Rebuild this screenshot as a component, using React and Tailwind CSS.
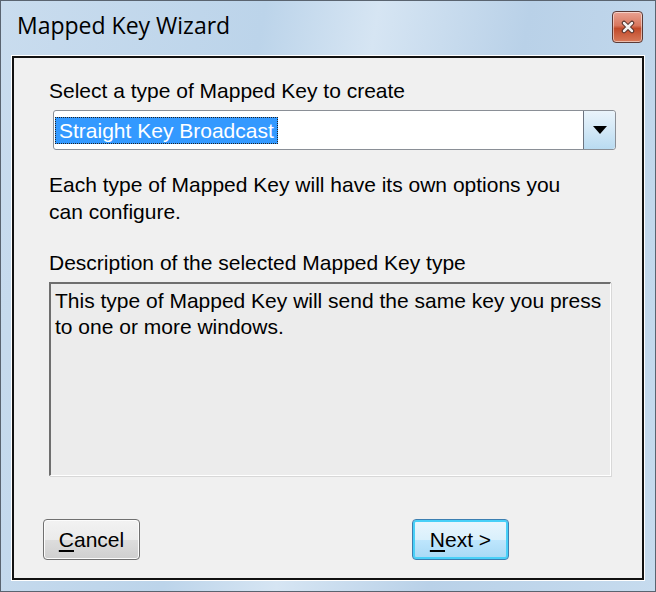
export default function App() {
  const sans = { fontFamily: '"Liberation Sans", Arial, sans-serif' };
  return (
    <div className="w-[656px] h-[592px] flex flex-col border border-[#5a6470] bg-[linear-gradient(100deg,#c9dcee_0%,#bcd4ea_35%,#d6e5f3_50%,#b9d1e8_70%,#c6dbee_100%)] px-[11px] pb-[11px]">
      <div className="h-[55px] flex items-start justify-between">
        <div className="pt-[7px] pl-[5px] text-[23px] text-black" style={{ fontFamily: '"Open Sans", "Noto Sans", sans-serif' }}>
          Mapped Key Wizard
        </div>
        <div className="mt-[10px] mr-[1px] w-[31px] h-[32px] rounded-[4px] border border-[#5b3a36] bg-[linear-gradient(180deg,#e9a292_0%,#d8775e_45%,#c14a2a_55%,#d87a5a_100%)] flex items-center justify-center shadow-[inset_0_0_0_1px_rgba(255,255,255,0.5)]">
          <svg width="14" height="14" viewBox="0 0 14 14">
            <path d="M3 3 L11 11 M11 3 L3 11" stroke="#4a2a24" strokeWidth="4.5" strokeLinecap="round" />
            <path d="M3 3 L11 11 M11 3 L3 11" stroke="#f4f0ee" strokeWidth="2.5" strokeLinecap="round" />
          </svg>
        </div>
      </div>
      <div className="flex-1 flex flex-col border-2 border-[#111] bg-[#f0f0f0] shadow-[0_0_0_1px_#ffffff] pl-[35px] pr-[26px]" style={sans}>
        <div className="pt-[21px] text-[21px] leading-[24px] text-black">Select a type of Mapped Key to create</div>
        <div className="mt-[7px] ml-[4px] h-[40px] flex border border-[#8a8f96] rounded-[3px] bg-white">
          <div className="flex-1 flex items-center pl-[1px]">
            <span className="bg-[#3399ff] text-white text-[21px] leading-[25px] px-[3px] border border-dotted border-[#222]">Straight Key Broadcast</span>
          </div>
          <div className="w-[32px] border-l border-[#6c7480] rounded-r-[3px] bg-[linear-gradient(180deg,#eaf4fb_0%,#d3e8f6_50%,#b9dbf1_100%)] flex items-center justify-center">
            <svg width="14" height="8" viewBox="0 0 14 8"><path d="M0 0 H14 L7 8 Z" fill="#000" /></svg>
          </div>
        </div>
        <div className="mt-[21px] text-[21px] leading-[27px] text-black">
          Each type of Mapped Key will have its own options you<br />can configure.
        </div>
        <div className="mt-[26px] text-[21px] leading-[24px] text-black">Description of the selected Mapped Key type</div>
        <div className="mt-[7px] h-[194px] mr-[5px] border-t-2 border-l-2 border-[#6e6e6e] border-r border-b border-r-[#ffffff] border-b-[#ffffff] shadow-[1px_1px_0_#d8d8d8] bg-[#ececec] px-[4px] pt-[4px] text-[21px] leading-[26px] text-black">
          This type of Mapped Key will send the same key you press<br />to one or more windows.
        </div>
        <div className="mt-[43px] flex">
          <button className="-ml-[6px] w-[97px] h-[41px] rounded-[4px] border border-[#707070] bg-[linear-gradient(180deg,#f2f2f2_0%,#ebebeb_50%,#dddddd_51%,#cfcfcf_100%)] text-[21px] text-black shadow-[inset_0_0_0_1px_#fcfcfc]">
            <span className="underline underline-offset-[3px]">C</span>ancel
          </button>
          <button className="ml-[272px] w-[97px] h-[41px] rounded-[4px] border border-[#3c7fb1] bg-[linear-gradient(180deg,#eaf6fd_0%,#d9f0fc_50%,#bee6fd_51%,#a7d9f5_100%)] text-[21px] text-black shadow-[inset_0_0_0_2px_#48d0f8]">
            <span className="underline underline-offset-[3px]">N</span>ext &gt;
          </button>
        </div>
      </div>
    </div>
  );
}
